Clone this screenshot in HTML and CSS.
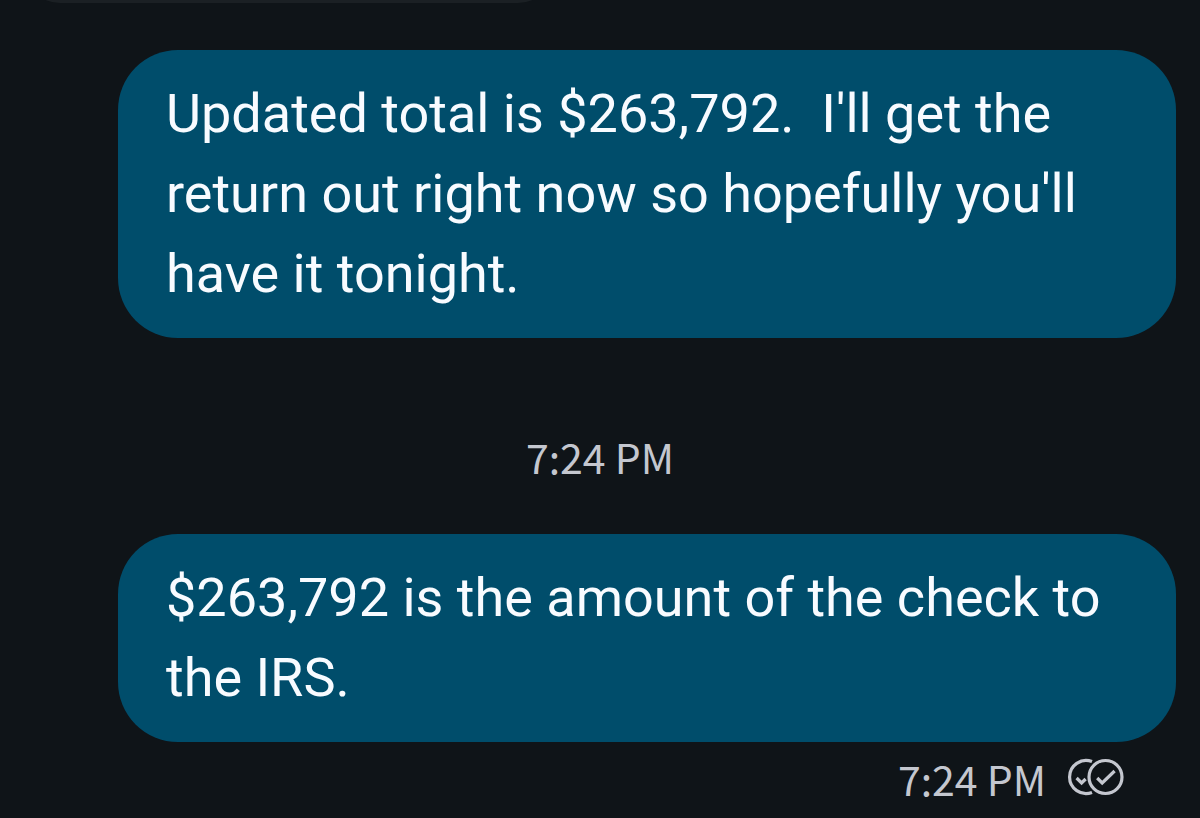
FILE: index.html
```
<!DOCTYPE html>
<html lang="en">
<head>
    <meta charset="UTF-8">
    <meta name="viewport" content="width=device-width, initial-scale=1.0">
    <title>Messages</title>
    <link rel="stylesheet" href="styles.css">
</head>
<body>
    <main class="thread">
        <div class="incoming"></div>

        <p class="bubble">Updated total is $263,792.&nbsp; I'll get the return out right now so hopefully you'll have it tonight.</p>

        <time class="divider" datetime="19:24">7:24 PM</time>

        <p class="bubble">$263,792 is the amount of the check to the IRS.</p>

        <div class="status">
            <time datetime="19:24">7:24 PM</time>
            <!-- read receipt -->
            <svg class="receipt" width="58" height="38" viewBox="0 0 58 38" fill="none" stroke="currentColor" stroke-width="3.2" role="img" aria-label="Read">
                <path d="M26 3.6A16.5 16.5 0 1 0 26 34.4"/>
                <path d="M10.6 20l5 5 4-4"/>
                <circle cx="39.5" cy="19" r="16.5"/>
                <path d="M31.2 20l5 5 12.4-12"/>
            </svg>
        </div>
    </main>
</body>
</html>
```
FILE: styles.css
```
body {
    margin: 0;
    background-color: #0f1418;
    color: #c4c7cf;
    font-family: "Noto Sans CJK SC", "Noto Sans", sans-serif;
    font-size: 41px;
    line-height: 48px;
}

.thread {
    display: flex;
    flex-direction: column;
    padding: 0 24px 16px;
    overflow: hidden;
}

/* end of the previous message, scrolled off the top */
.incoming {
    width: 46%;
    height: 80px;
    margin-top: -77px;
    margin-bottom: 47px;
    border-radius: 36px;
    background-color: #1b2024;
}

.bubble {
    box-sizing: border-box;
    margin: 0 0 0 94px;
    padding: 24px 48px;
    border-radius: 60px;
    background-color: #004d6b;
    color: #f8fbff;
    font-family: Roboto, sans-serif;
    font-size: 54px;
    line-height: 80px;
}

.divider {
    margin: 94px 0 54px;
    text-align: center;
}

.status {
    display: flex;
    justify-content: flex-end;
    align-items: center;
    gap: 20px;
    padding: 12px 52px 0 0;
}

.receipt {
    margin-bottom: 2px;
}
```
